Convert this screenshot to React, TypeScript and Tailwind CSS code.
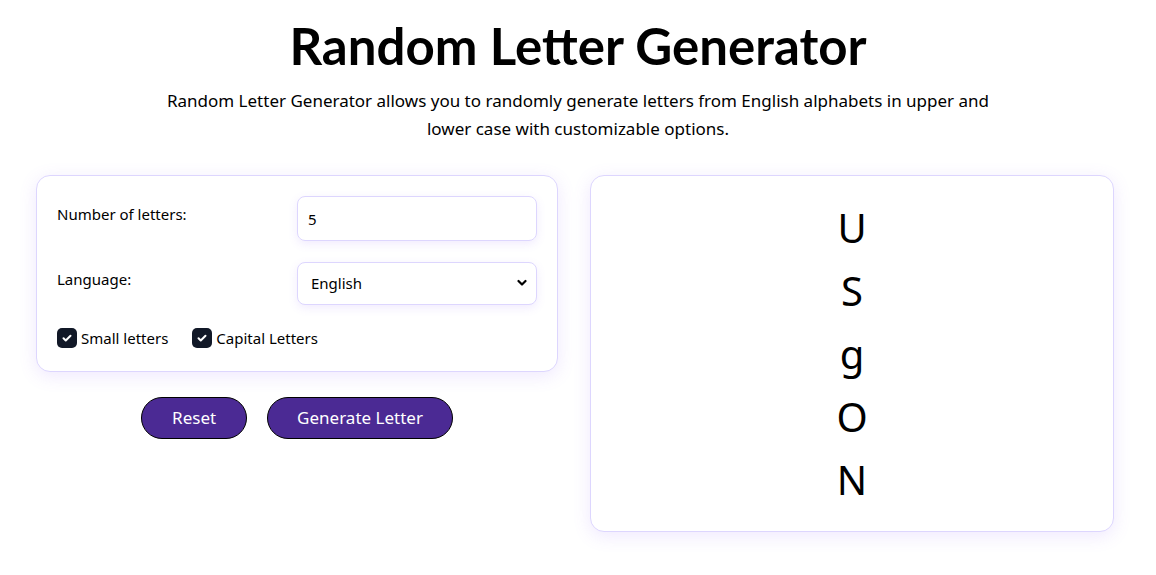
import React, { useState } from 'react';

const pickLetters = () => ['U', 'S', 'g', 'O', 'N'];

function Check() {
  return (
    <span className="w-5 h-5 rounded-[5px] bg-[#111827] flex items-center justify-center">
      <svg width="12" height="12" viewBox="0 0 24 24" fill="none" stroke="white" strokeWidth="4" strokeLinecap="round" strokeLinejoin="round">
        <path d="M5 12.5l4.5 4.5L19 7.5" />
      </svg>
    </span>
  );
}

export default function App() {
  const [count, setCount] = useState('5');
  const [letters] = useState<string[]>(pickLetters());

  return (
    <div className="min-h-screen bg-white text-black font-['Noto_Sans','Open_Sans',sans-serif]">
      <h1 className="pt-[14px] text-center text-[51px] leading-[63px] font-bold font-['Lato','Noto_Sans',sans-serif]">Random Letter Generator</h1>
      <p className="mt-[10px] mx-auto max-w-[830px] text-center text-[17px] leading-[28px]">
        Random Letter Generator allows you to randomly generate letters from English alphabets in upper and lower case with customizable options.
      </p>

      <div className="mt-[32px] pl-[36px] flex gap-[32px] items-start">
        <div className="w-[522px] flex flex-col">
          <div className="rounded-[14px] border border-[#ddd6fe] bg-white shadow-[0_4px_18px_rgba(139,92,246,0.14)] px-5 pt-5 pb-[21px]">
            <div className="grid grid-cols-2 items-start">
              <label className="pt-[7px] text-[15px]">Number of letters:</label>
              <input
                value={count}
                onChange={(e) => setCount(e.target.value)}
                className="h-[45px] rounded-[8px] border border-[#ddd6fe] px-[10px] text-[15px] outline-none shadow-[0_3px_10px_rgba(139,92,246,0.12)]"
              />
            </div>
            <div className="grid grid-cols-2 items-start mt-[21px]">
              <label className="pt-[6px] text-[15px]">Language:</label>
              <div className="relative">
                <select className="w-full h-[43px] appearance-none rounded-[8px] border border-[#ddd6fe] bg-white pl-[13px] text-[15px] outline-none shadow-[0_3px_10px_rgba(139,92,246,0.12)]">
                  <option>English</option>
                </select>
                <svg className="absolute right-[10px] top-[17px] pointer-events-none" width="10" height="8" viewBox="0 0 10 8" fill="none" stroke="black" strokeWidth="2.2" strokeLinecap="round" strokeLinejoin="round">
                  <path d="M1.5 2l3.5 3.5L8.5 2" />
                </svg>
              </div>
            </div>
            <div className="mt-[22px] flex items-center gap-6 text-[15px]">
              <label className="flex items-center gap-1">
                <Check />
                <span>Small letters</span>
              </label>
              <label className="flex items-center gap-1">
                <Check />
                <span>Capital Letters</span>
              </label>
            </div>
          </div>

          <div className="mt-[25px] flex justify-center gap-5">
            <button className="h-[42px] px-[30px] rounded-full bg-[#4b2a94] border border-black text-white text-[17px]">Reset</button>
            <button className="h-[42px] px-[29px] rounded-full bg-[#4b2a94] border border-black text-white text-[17px]">Generate Letter</button>
          </div>
        </div>

        <div className="w-[524px] rounded-[14px] border border-[#ddd6fe] bg-white shadow-[0_4px_18px_rgba(139,92,246,0.14)] py-5 flex flex-col items-center">
          {letters.map((l, i) => (
            <div key={i} className="text-[40px] leading-[63px]">{l}</div>
          ))}
        </div>
      </div>
    </div>
  );
}
